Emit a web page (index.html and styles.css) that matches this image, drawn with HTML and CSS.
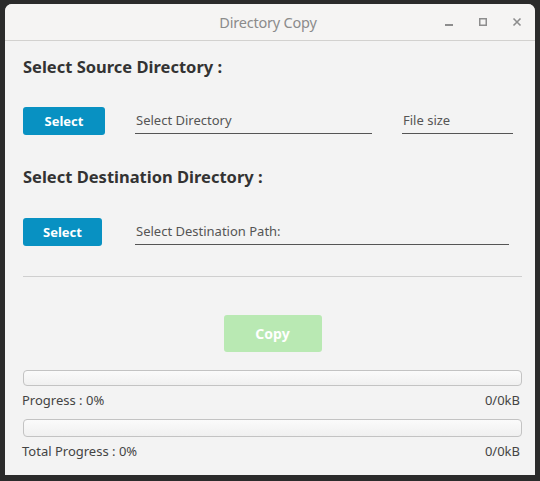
FILE: index.html
```html
<!DOCTYPE html>
<html>
<head>
<meta charset="utf-8">
<link rel="stylesheet" href="styles.css">
</head>
<body>
<div class="window">
  <div class="titlebar">
    <div class="title">Directory Copy</div>
    <div class="controls">
      <svg class="ctl" width="12" height="12" viewBox="0 0 12 12"><rect x="2" y="8" width="8" height="2" fill="#8d8d8d"/></svg>
      <svg class="ctl" width="12" height="12" viewBox="0 0 12 12"><rect x="2.75" y="2.75" width="6.5" height="6.5" fill="none" stroke="#8d8d8d" stroke-width="1.5"/></svg>
      <svg class="ctl" width="12" height="12" viewBox="0 0 12 12"><path d="M2.5 2.5 L9.5 9.5 M9.5 2.5 L2.5 9.5" stroke="#8d8d8d" stroke-width="1.6"/></svg>
    </div>
  </div>
  <div class="content">
    <h2 class="heading">Select Source Directory :</h2>
    <div class="row row-src">
      <button class="btn btn-blue btn-w1">Select</button>
      <div class="field field-src">Select Directory</div>
      <div class="field field-size">File size</div>
    </div>
    <h2 class="heading heading-2">Select Destination Directory :</h2>
    <div class="row row-dst">
      <button class="btn btn-blue btn-w2">Select</button>
      <div class="field field-dst">Select Destination Path:</div>
    </div>
    <div class="sep"></div>
    <div class="copy-wrap"><button class="btn btn-copy">Copy</button></div>
    <div class="progress progress-1"></div>
    <div class="plabel"><span>Progress : 0%</span><span>0/0kB</span></div>
    <div class="progress progress-2"></div>
    <div class="plabel"><span>Total Progress : 0%</span><span>0/0kB</span></div>
  </div>
</div>
</body>
</html>
```

FILE: styles.css
```css
html, body {
  margin: 0;
  padding: 0;
  background: #2b2b2b;
  width: 540px;
  height: 481px;
  overflow: hidden;
}
body {
  font-family: "Noto Sans", "Open Sans", sans-serif;
  color: #444;
}
.window {
  margin: 4px 5px 0 5px;
  width: 530px;
  height: 471px;
  background: #f3f3f3;
  border-radius: 7px 7px 0 0;
  display: flex;
  flex-direction: column;
  overflow: hidden;
}
.titlebar {
  height: 36px;
  border-bottom: 1px solid #d2d1cf;
  background: #f5f4f3;
  position: relative;
  display: flex;
  align-items: center;
  justify-content: center;
  flex-shrink: 0;
}
.title {
  font-size: 14.5px;
  color: #8b8b8b;
  letter-spacing: -0.2px;
  margin-left: -4px;
}
.controls {
  position: absolute;
  right: 12px;
  top: 12px;
  display: flex;
  gap: 22px;
}
.ctl { display: block; }
.content {
  padding: 16px 13px 0 18px;
  display: flex;
  flex-direction: column;
}
.heading {
  margin: 0;
  font-size: 16.5px;
  line-height: 20px;
  font-weight: 700;
  color: #333;
  letter-spacing: 0;
}
.heading-2 { margin-top: 32px; }
.row {
  display: flex;
  align-items: flex-start;
  margin-top: 30px;
}
.row-dst { margin-top: 31px; }
.btn {
  border: none;
  border-radius: 3px;
  font-family: "Noto Sans", "Open Sans", sans-serif;
  font-weight: 700;
  font-size: 13px;
  color: #fff;
  padding: 0;
}
.btn-blue {
  background: #0891c2;
  height: 28px;
}
.btn-w1 { width: 82px; }
.btn-w2 { width: 79px; }
.field {
  font-size: 13px;
  color: #555;
  height: 27px;
  line-height: 27px;
  border-bottom: 1.5px solid #555;
  box-sizing: border-box;
  padding-left: 1px;
}
.field-src { margin-left: 30px; width: 237px; }
.field-size { margin-left: 30px; width: 111px; }
.field-dst { margin-left: 33px; width: 374px; }
.sep {
  margin-top: 30px;
  height: 1px;
  background: #cfcfcf;
  width: 499px;
}
.copy-wrap {
  display: flex;
  justify-content: center;
  width: 499px;
  margin-top: 38px;
}
.btn-copy {
  width: 98px;
  height: 37px;
  background: #b9e9b3;
  font-size: 14px;
}
.progress {
  width: 499px;
  height: 16px;
  box-sizing: border-box;
  border: 1px solid #c3c3c3;
  border-radius: 4px;
  background: linear-gradient(#fbfbfb, #f0f0f0);
}
.progress-1 { margin-top: 18px; }
.progress-2 { margin-top: 11px; height: 18px; }
.plabel {
  display: flex;
  justify-content: space-between;
  width: 498px;
  font-size: 13px;
  color: #444;
  line-height: 16px;
  margin-top: 6px;
  margin-left: -1px;
}
```
